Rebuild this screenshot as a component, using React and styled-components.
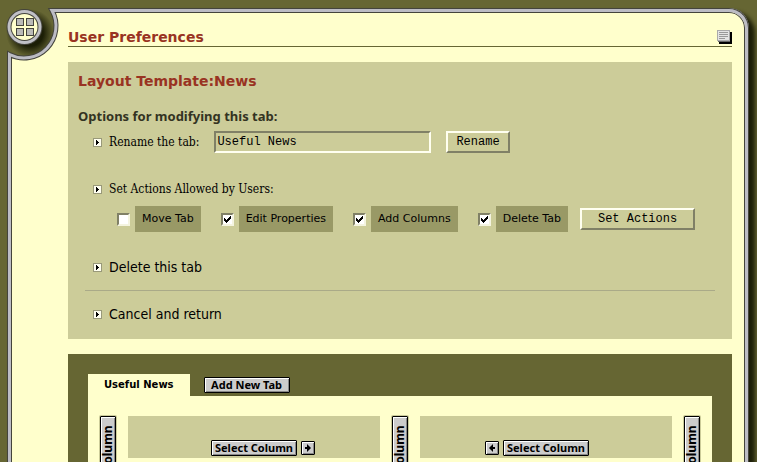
import React from 'react';
import styled, { createGlobalStyle } from 'styled-components';

const color = {
  olive: '#666633',
  moss: '#999966',
  sage: '#cccc99',
  cream: '#ffffcc',
  brick: '#993322',
  ink: '#000000',
  text: '#333322',
  bevelLight: '#fffff0',
  bevelDark: '#808066',
};

const sans = '"DejaVu Sans", Verdana, sans-serif';
const sansNarrow = '"DejaVu Sans Condensed", Verdana, sans-serif';
const slab = '"DejaVu Serif Condensed", "DejaVu Serif", serif';
const small = '"Noto Sans", Verdana, sans-serif';
const mono = '"Liberation Mono", "Courier New", monospace';

const GlobalStyle = createGlobalStyle`
  *, *::before, *::after { box-sizing: border-box; }
  html { background: ${color.olive}; scrollbar-width: none; }
  body { margin: 0; font-family: ${sans}; color: ${color.ink}; }
  h1, h2, h3 { margin: 0; padding: 0; }
  button, input { margin: 0; font: inherit; color: inherit; }
`;

const Page = styled.div`
  display: flex;
  flex-direction: column;
  min-height: 100vh;
  padding: 8px 8px 0 7px;
  overflow: hidden;
  background: ${color.olive};
`;

const Sheet = styled.main`
  position: relative;
  flex: 1;
  padding: 16px 13px 20px 57px;
  border: solid #bcbcc4;
  border-width: 4px 4px 0;
  border-radius: 0 20px 0 0;
  background: ${color.cream};
  box-shadow:
    inset 0 0 0 1px #44443c,
    5px 5px 4px 1px #1c1e08;

  &::before {
    content: '';
    position: absolute;
    inset: -4px -4px 0;
    border: 1px solid #44443c;
    border-bottom: 0;
    border-radius: 0 20px 0 0;
    pointer-events: none;
  }
`;

const Ornament = styled.button`
  position: absolute;
  top: -12px;
  left: -11px;
  width: 64px;
  height: 66px;
  padding: 0;
  border: 0;
  background: none;
  cursor: pointer;

  svg { display: block; }
`;

const PageHeader = styled.header`
  display: flex;
  align-items: center;
  justify-content: space-between;
  height: 18px;
  box-sizing: content-box;
  border-bottom: 1px solid ${color.olive};
  margin-bottom: 15px;
`;

const Heading = styled.h1`
  font: bold 14px/18px ${sans};
  color: ${color.brick};
`;

const NoteButton = styled.button`
  padding: 0;
  border: 0;
  background: none;
  line-height: 0;
  cursor: pointer;
`;

const OptionsPanel = styled.section`
  padding: 6px 17px 15px;
  background: ${color.sage};
`;

const PanelTitle = styled(Heading).attrs({ as: 'h2' })`
  margin-left: -7px;
  line-height: 26px;
`;

const PanelSubtitle = styled.h3`
  margin: 12px 0 0 -7px;
  font: bold 13px/20px ${small};
  color: ${color.text};
`;

const OptionRow = styled.div`
  display: flex;
  align-items: center;
  gap: 7px;
  min-height: ${(p) => p.$height || 20}px;
  margin-top: ${(p) => p.$space || 0}px;
  padding-left: 8px;
`;

const SlabLabel = styled.label`
  font: 12px/20px ${slab};
`;

const SlabText = styled.span`
  font: 12px/20px ${slab};
`;

const TextLink = styled.a`
  font: 14px/20px ${sansNarrow};
  color: ${color.ink};
  text-decoration: none;
`;

const TabNameInput = styled.input`
  width: 217px;
  height: 22px;
  margin: 0 8px;
  padding: 0 1px;
  border: 2px solid;
  border-color: ${color.bevelDark} ${color.bevelLight} ${color.bevelLight} ${color.bevelDark};
  border-radius: 0;
  background: ${color.sage};
  font: 12px ${mono};
`;

const FormButton = styled.button`
  height: 22px;
  padding: 0 ${(p) => (p.$wide ? 16 : 8)}px;
  border: 2px solid;
  border-color: ${color.bevelLight} ${color.bevelDark} ${color.bevelDark} ${color.bevelLight};
  background: ${color.sage};
  font: 12px ${mono};
  white-space: nowrap;
`;

const ActionsRow = styled.form`
  display: flex;
  align-items: center;
  gap: 12px;
  margin-top: 7px;
  padding-left: 32px;
`;

const CheckList = styled.div`
  display: flex;
  gap: 20px;
`;

const CheckItem = styled.div`
  display: flex;
  align-items: center;
  gap: 5px;
`;

const CheckControl = styled.span`
  display: grid;

  > * { grid-area: 1 / 1; }

  svg {
    visibility: hidden;
    pointer-events: none;
  }

  input:checked + svg { visibility: visible; }
`;

const CheckBox = styled.input.attrs({ type: 'checkbox' })`
  appearance: none;
  width: 13px;
  height: 13px;
  border: 2px solid;
  border-color: ${color.bevelDark} #f4f4e0 #f4f4e0 ${color.bevelDark};
  background: #ffffff;
`;

const CheckLabel = styled.label`
  padding: 0 7px;
  background: ${color.moss};
  font: 11px/26px ${sans};
  white-space: nowrap;
`;

const Divider = styled.hr`
  height: 1px;
  margin: 13px 0 0;
  border: 0;
  background: #aaaa88;
`;

const LayoutPanel = styled.section`
  margin-top: 15px;
  padding: 20px 20px 0;
  background: ${color.olive};
`;

const TabBar = styled.nav`
  display: flex;
  align-items: center;
  gap: 14px;
`;

const CurrentTab = styled.a`
  padding: 0 16px;
  background: ${color.cream};
  color: ${color.ink};
  font: bold 10px/22px ${sans};
  text-decoration: none;
`;

const GrayButton = styled.button`
  display: inline-flex;
  align-items: center;
  justify-content: center;
  min-width: 86px;
  height: 16px;
  padding: 0 2px;
  border: 1px solid ${color.ink};
  border-radius: 1px;
  background: #cccccc;
  box-shadow: inset 1px 1px 0 #ffffff, inset -1px -1px 0 #888888;
  font: bold 11px/14px ${small};
  white-space: nowrap;
`;

const ArrowButton = styled(GrayButton)`
  min-width: 14px;
  height: 14px;
  padding: 0;
`;

const SideButton = styled(GrayButton)`
  min-width: 16px;
  height: 96px;
  padding: 8px 0;
  justify-content: flex-end;
  writing-mode: vertical-rl;
  transform: rotate(180deg);
  box-shadow: inset -1px -1px 0 #ffffff, inset 1px 1px 0 #888888,
    0 0 0 1px ${color.sage};
  font: bold 12px/14px ${small};
`;

const Columns = styled.div`
  display: grid;
  grid-template-columns: 16px 1fr 16px 1fr 16px;
  align-items: start;
  gap: 12px;
  padding: 20px 12px;
  background: ${color.cream};
`;

const ColumnCell = styled.div`
  display: grid;
  grid-template-columns: 14px auto 14px;
  justify-content: center;
  align-content: end;
  align-items: center;
  gap: 4px;
  height: 42px;
  padding-bottom: 2px;
  background: ${color.sage};
`;

const SelectButton = styled(GrayButton)`
  grid-column: 2;
`;

const Bullet = () => (
  <svg width="9" height="9" viewBox="0 0 9 9" aria-hidden="true" shapeRendering="crispEdges">
    <rect width="9" height="9" fill="#99997a" />
    <rect x="1" y="1" width="7" height="7" fill="#fffff0" />
    <path d="M3 2h1v1h1v1h1v1h-1v1h-1v1h-1z" fill="#000" />
  </svg>
);

const Tick = () => (
  <svg width="13" height="13" viewBox="0 0 13 13" aria-hidden="true" shapeRendering="crispEdges">
    <path d="M3 5h1v1h1v1h1v-1h1v-1h1v-1h1v-1h1v3h-1v1h-1v1h-1v1h-1v1h-1v-1h-1v-1h-1z" fill="#000" />
  </svg>
);

const Arrow = ({ left }) => (
  <svg width="8" height="8" viewBox="0 0 8 8" aria-hidden="true">
    <path
      d={left ? 'M1 4l4-4v3h2v2H5v3z' : 'M7 4L3 0v3H1v2h2v3z'}
      fill="#000"
    />
  </svg>
);

const NoteIcon = () => (
  <svg width="15" height="14" viewBox="0 0 15 14" aria-hidden="true" shapeRendering="crispEdges">
    <rect x="2" y="2" width="13" height="12" fill="#000" />
    <rect x="1" y="1" width="12" height="11" fill="#666" />
    <rect width="13" height="11" fill="#aaa" />
    <rect x="1" y="1" width="11" height="9" fill="#e4e4e4" />
    <path d="M2 2h9v1H2zM2 4h9v1H2zM2 6h9v1H2zM2 8h6v1H2z" fill="#999" />
  </svg>
);

const GridEmblem = () => (
  <svg width="64" height="66" viewBox="0 0 64 66" aria-hidden="true">
    <defs>
      <radialGradient id="emblemShade">
        <stop offset="0.55" stopColor="#1c1e06" />
        <stop offset="1" stopColor="#1c1e06" stopOpacity="0" />
      </radialGradient>
    </defs>
    <path d="M0 0H52V10.500A32 32 0 0 1 9.500 54.500L7 60H0z" fill={color.olive} />
    <circle cx="30" cy="33" r="24" fill="url(#emblemShade)" />
    <g fill="none">
      <path d="M64 10.500H52A32 32 0 0 1 9.500 54.500V66" stroke="#44443c" strokeWidth="5" />
      <path d="M64 10.500H52A32 32 0 0 1 9.500 54.500V66" stroke="#bcbcc4" strokeWidth="3" />
    </g>
    <circle cx="24.500" cy="27" r="18" fill="#44443c" />
    <circle cx="24.500" cy="27" r="17" fill="#c0c0c6" />
    <circle cx="24.500" cy="27" r="14" fill="#44443c" />
    <circle cx="24.500" cy="27" r="13" fill={color.cream} />
    <g fill="#bbbbb8" stroke="#44443c" strokeWidth="1">
      <rect x="16.500" y="18.500" width="7" height="7" />
      <rect x="26.500" y="18.500" width="7" height="7" />
      <rect x="16.500" y="28.500" width="7" height="7" />
      <rect x="26.500" y="28.500" width="7" height="7" />
    </g>
  </svg>
);

const ACTIONS = [
  { id: 'move', label: 'Move Tab', checked: false },
  { id: 'edit', label: 'Edit Properties', checked: true },
  { id: 'add', label: 'Add Columns', checked: true },
  { id: 'delete', label: 'Delete Tab', checked: true },
];

export default function App() {
  return (
    <>
      <GlobalStyle />
      <Page>
        <Sheet>
          <Ornament type="button" aria-label="Menu">
            <GridEmblem />
          </Ornament>

          <PageHeader>
            <Heading>User Preferences</Heading>
            <NoteButton type="button" aria-label="Notes">
              <NoteIcon />
            </NoteButton>
          </PageHeader>

          <OptionsPanel>
            <PanelTitle>Layout Template:News</PanelTitle>
            <PanelSubtitle>Options for modifying this tab:</PanelSubtitle>

            <OptionRow $height={32}>
              <Bullet />
              <SlabLabel htmlFor="tab-name">Rename the tab:</SlabLabel>
              <TabNameInput id="tab-name" type="text" defaultValue="Useful News" />
              <FormButton type="button">Rename</FormButton>
            </OptionRow>

            <OptionRow $space={21}>
              <Bullet />
              <SlabText>Set Actions Allowed by Users:</SlabText>
            </OptionRow>

            <ActionsRow onSubmit={(e) => e.preventDefault()}>
              <CheckList>
                {ACTIONS.map((a) => (
                  <CheckItem key={a.id}>
                    <CheckControl>
                      <CheckBox id={a.id} defaultChecked={a.checked} />
                      <Tick />
                    </CheckControl>
                    <CheckLabel htmlFor={a.id}>{a.label}</CheckLabel>
                  </CheckItem>
                ))}
              </CheckList>
              <FormButton $wide type="submit">Set Actions</FormButton>
            </ActionsRow>

            <OptionRow $space={25}>
              <Bullet />
              <TextLink href="#delete">Delete this tab</TextLink>
            </OptionRow>
            <Divider />
            <OptionRow $space={13}>
              <Bullet />
              <TextLink href="#cancel">Cancel and return</TextLink>
            </OptionRow>
          </OptionsPanel>

          <LayoutPanel>
            <TabBar>
              <CurrentTab href="#useful-news">Useful News</CurrentTab>
              <GrayButton type="button">Add New Tab</GrayButton>
            </TabBar>
            <Columns>
              <SideButton type="button">Add Column</SideButton>
              <ColumnCell>
                <SelectButton type="button">Select Column</SelectButton>
                <ArrowButton type="button" aria-label="Move column right">
                  <Arrow />
                </ArrowButton>
              </ColumnCell>
              <SideButton type="button">Add Column</SideButton>
              <ColumnCell>
                <ArrowButton type="button" aria-label="Move column left">
                  <Arrow left />
                </ArrowButton>
                <SelectButton type="button">Select Column</SelectButton>
              </ColumnCell>
              <SideButton type="button">Add Column</SideButton>
            </Columns>
          </LayoutPanel>
        </Sheet>
      </Page>
    </>
  );
}
